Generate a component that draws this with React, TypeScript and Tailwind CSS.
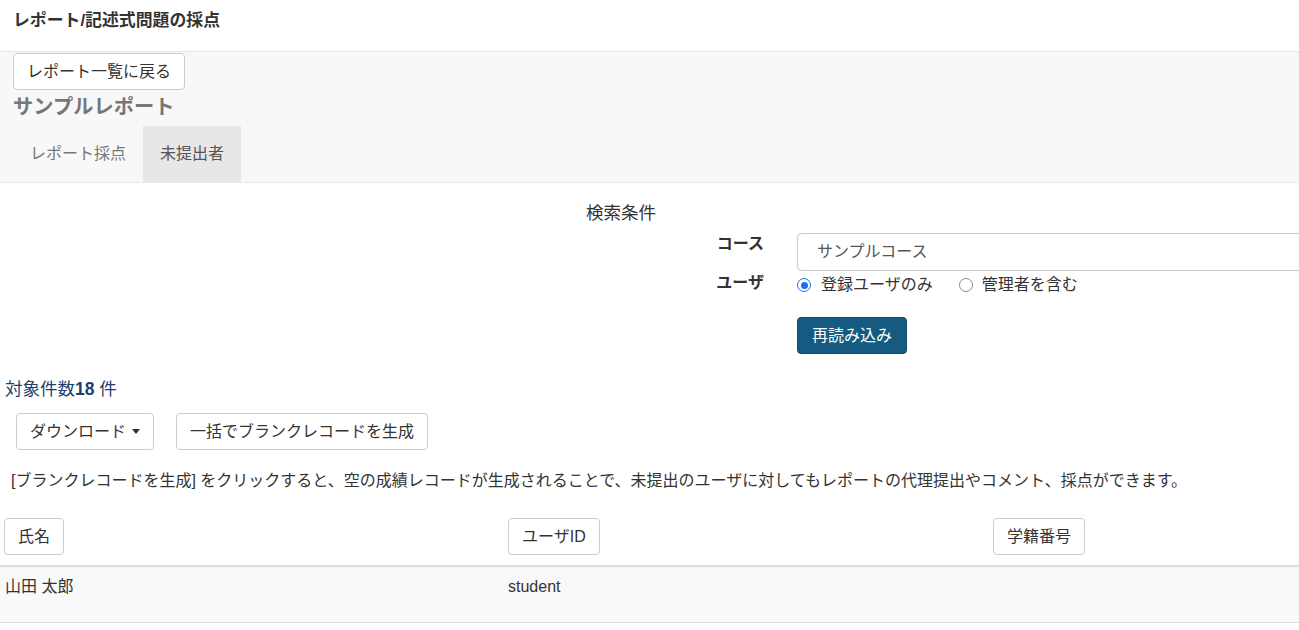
import React from 'react';

const FONT = '"Liberation Sans", "Noto Sans CJK JP", sans-serif';

function Btn({ children, className = '' }: { children: React.ReactNode; className?: string }) {
    return (
        <button
            type="button"
            className={`h-[37px] px-[13px] border border-[#ccc] rounded-[4px] bg-white text-[#333] text-[16px] leading-[22px] flex items-center gap-[6px] ${className}`}
        >
            {children}
        </button>
    );
}

function Radio({ checked, className = '' }: { checked?: boolean; className?: string }) {
    if (checked) {
        return (
            <span className={`w-[14px] h-[14px] rounded-full border-[1.5px] border-[#1a6ff0] bg-white flex items-center justify-center shrink-0 ${className}`}>
                <span className="block w-[7px] h-[7px] rounded-full bg-[#1a6ff0]" />
            </span>
        );
    }
    return <span className={`block w-[14px] h-[14px] rounded-full border border-[#8a8a8a] bg-white shrink-0 ${className}`} />;
}

export default function App() {
    return (
        <div className="w-[1299px] h-[630px] overflow-hidden bg-white text-[#333]" style={{ fontFamily: FONT }}>
            {/* Header */}
            <div className="h-[52px] border-b border-[#e5e5e5] pl-[13px] pt-[9px]">
                <h1 className="text-[16.875px] leading-[24px] font-bold text-[#333]">レポート/記述式問題の採点</h1>
            </div>

            {/* Report nav */}
            <div className="bg-[#f8f8f8] border-b border-[#e7e7e7] pl-[13px] pt-[1px]">
                <Btn>レポート一覧に戻る</Btn>
                <h2 className="mt-[4px] text-[20.25px] leading-[26px] font-bold text-[#777]">サンプルレポート</h2>
                <div className="mt-[6px] flex h-[56px]">
                    <div className="px-[17px] flex items-center text-[16px] text-[#777]">レポート採点</div>
                    <div className="px-[17px] flex items-center text-[16px] text-[#555] bg-[#e7e7e7]">未提出者</div>
                </div>
            </div>

            {/* Search */}
            <div className="pt-[18px]">
                <div className="w-[1242px] text-center text-[17.5px] leading-[24px] text-[#333]">検索条件</div>
                <div className="mt-[8px] flex items-start">
                    <div className="w-[764px] shrink-0 text-right font-bold text-[16px] leading-[22px]">コース</div>
                    <div className="ml-[33px] w-[600px] h-[38px] border border-[#ccc] rounded-[4px] pl-[19px] flex items-center text-[16px] text-[#555] shrink-0">
                        サンプルコース
                    </div>
                </div>
                <div className="mt-[1px] flex items-start">
                    <div className="w-[764px] shrink-0 text-right font-bold text-[16px] leading-[22px]">ユーザ</div>
                    <div className="ml-[33px] pt-[2px] flex items-center text-[16px] leading-[22px]">
                        <Radio checked />
                        <span className="ml-[10px]">登録ユーザのみ</span>
                        <Radio className="ml-[26px]" />
                        <span className="ml-[9px]">管理者を含む</span>
                    </div>
                </div>
                <div className="mt-[21px] pl-[797px]">
                    <button
                        type="button"
                        className="h-[37px] w-[110px] rounded-[4px] bg-[#155a80] border border-[#114a6b] text-white text-[16px] flex items-center justify-center"
                    >
                        再読み込み
                    </button>
                </div>
            </div>

            {/* Results */}
            <div className="mt-[22px] pl-[5px] text-[17.5px] leading-[26px] text-[#1d3f6f]">
                対象件数<span className="font-bold">18</span> 件
            </div>
            <div className="mt-[11px] pl-[16px] flex gap-[22px]">
                <Btn>
                    ダウンロード
                    <span className="w-0 h-0 border-x-[4px] border-t-[5px] border-x-transparent border-t-[#333]" />
                </Btn>
                <Btn>一括でブランクレコードを生成</Btn>
            </div>
            <p className="mt-[20px] pl-[11px] text-[16px] leading-[22px] whitespace-nowrap">
                [ブランクレコードを生成] をクリックすると、空の成績レコードが生成されることで、未提出のユーザに対してもレポートの代理提出やコメント、採点ができます。
            </p>

            {/* Table */}
            <div className="mt-[26px]">
                <div className="grid grid-cols-[504px_485px_1fr] border-b-2 border-[#ddd] pb-[10px]">
                    <div className="pl-[4px]">
                        <Btn>氏名</Btn>
                    </div>
                    <div className="pl-[4px]">
                        <Btn>ユーザID</Btn>
                    </div>
                    <div className="pl-[4px]">
                        <Btn>学籍番号</Btn>
                    </div>
                </div>
                <div className="grid grid-cols-[504px_485px_1fr] bg-[#f9f9f9] border-b border-[#ddd] h-[56px] pt-[9px] text-[16px] leading-[22px]">
                    <div className="pl-[5px]">山田 太郎</div>
                    <div className="pl-[4px]">student</div>
                    <div />
                </div>
            </div>
        </div>
    );
}
